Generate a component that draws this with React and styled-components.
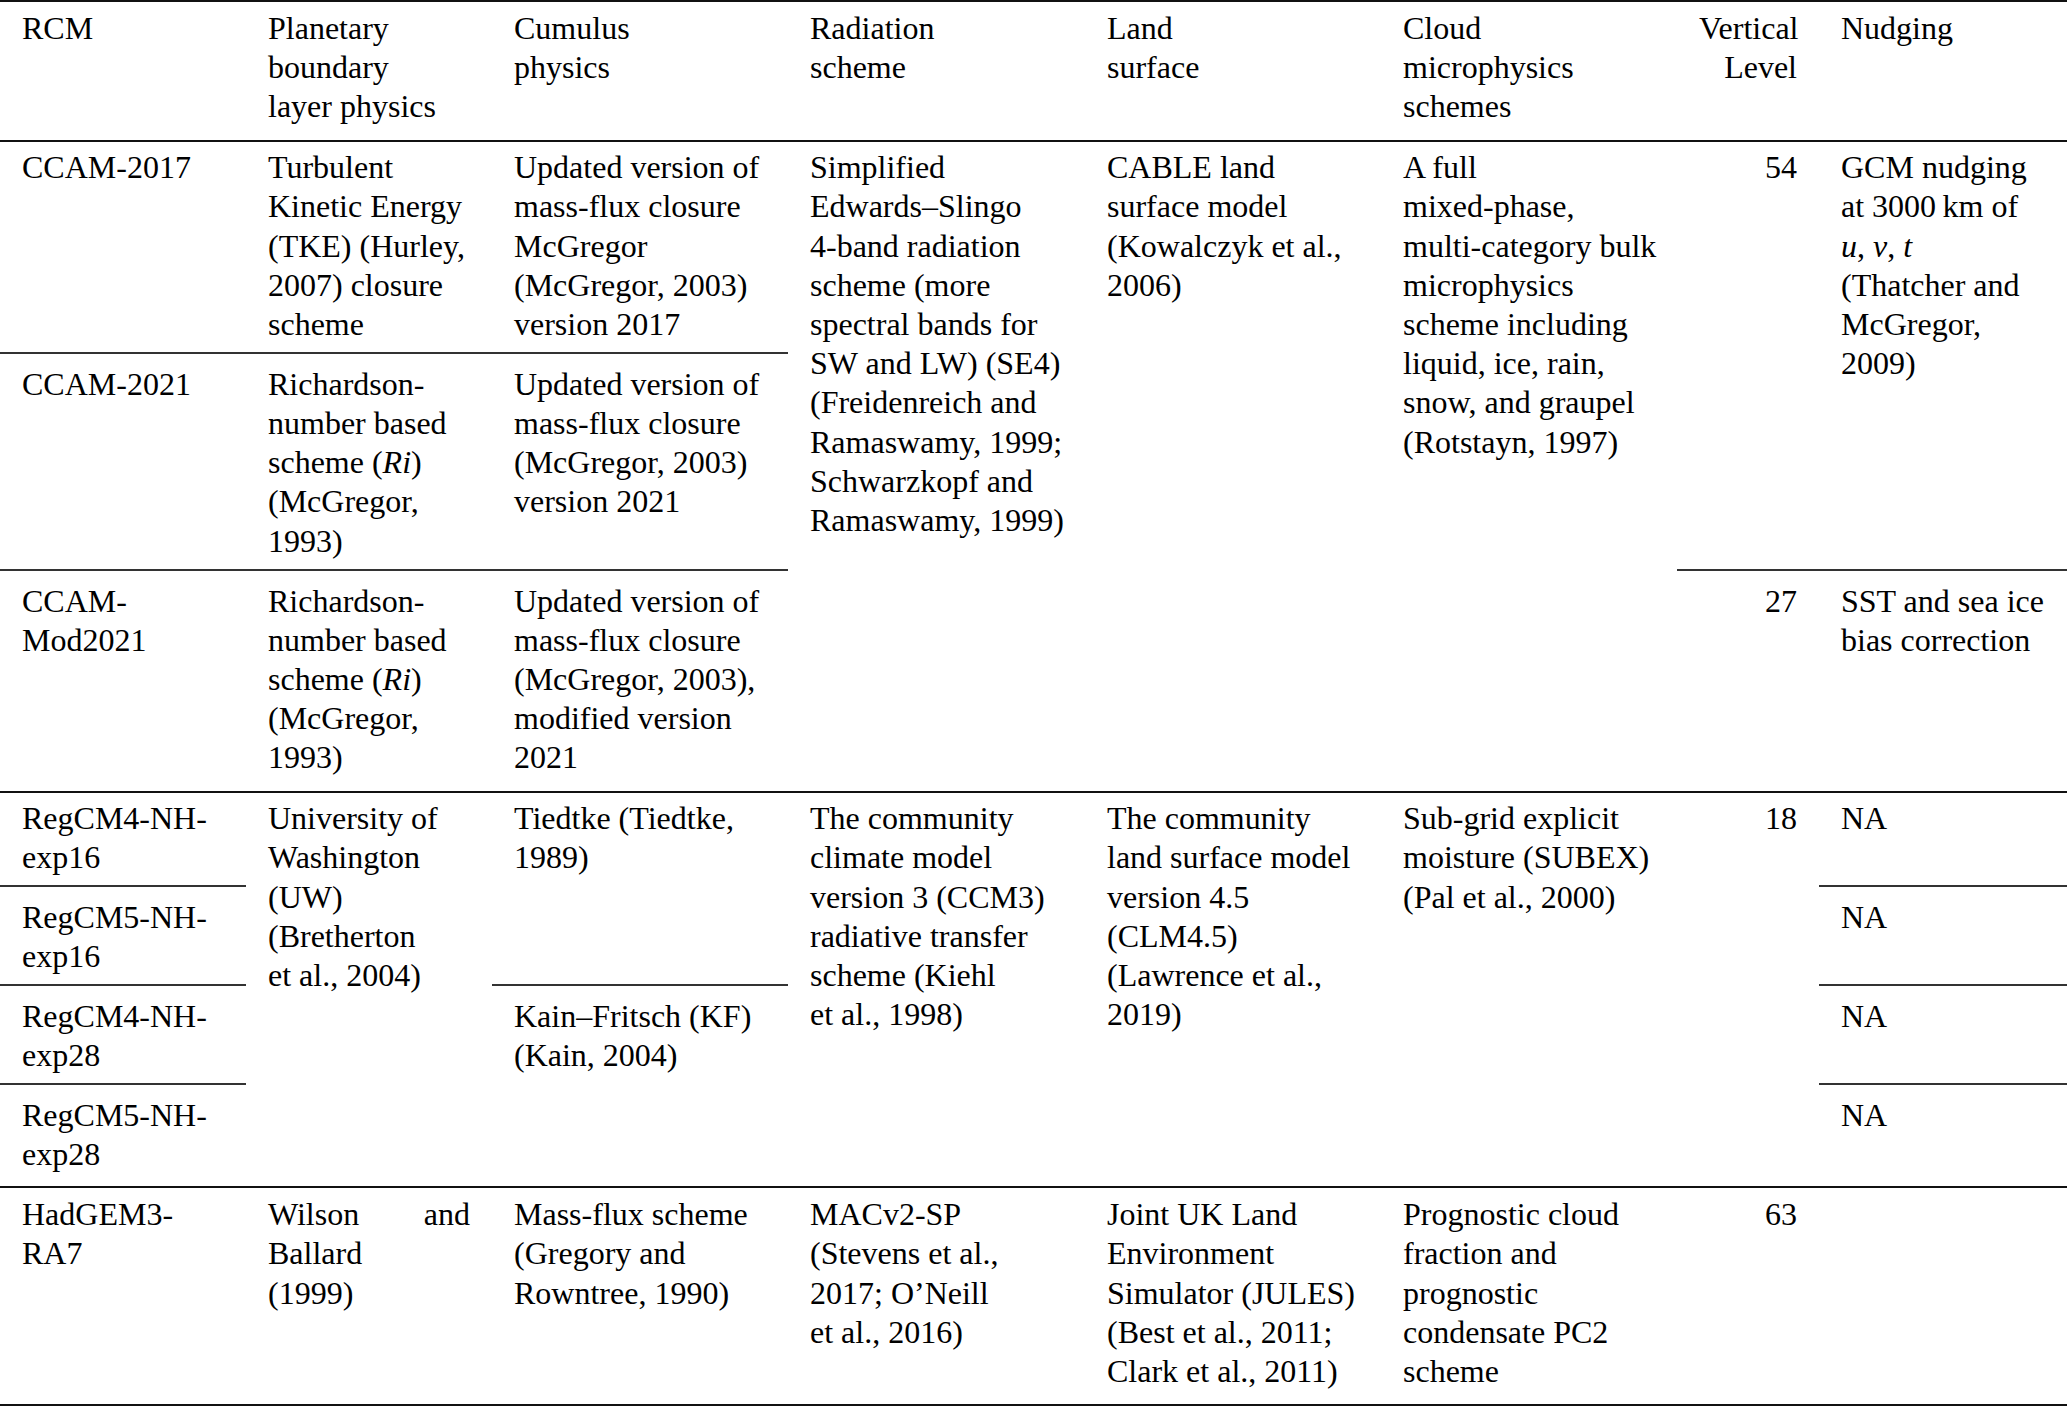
import React from 'react';
import styled, { createGlobalStyle } from 'styled-components';

const Global = createGlobalStyle`
  html, body { margin: 0; padding: 0; background: #ffffff; }
  body {
    font-family: "Liberation Serif", "Times New Roman", serif;
    color: #000000;
  }
`;

const Table = styled.table`
  width: 2067px;
  table-layout: fixed;
  border-collapse: separate;
  border-spacing: 0;
  border-top: 2px solid #111111;
  font-size: 32px;
  line-height: 39.2px;
`;

const Col = styled.col`
  width: ${(p) => p.$w}px;
`;

const Row = styled.tr`
  & > td,
  & > th {
    padding-top: ${(p) => p.$pt}px;
    padding-bottom: ${(p) => p.$pb}px;
  }
`;

const Cell = styled.td`
  vertical-align: top;
  padding-left: 22px;
  padding-right: 22px;
  text-align: ${(p) => (p.$right ? 'right' : 'left')};
  white-space: nowrap;
  font-weight: normal;
  border-bottom: 2px solid ${(p) => (p.$thin ? '#333333' : '#111111')};
`;

const HeadCell = styled(Cell).attrs({ as: 'th' })``;

const Math = styled.i`
  font-style: italic;
`;

const Spread = styled.span`
  display: flex;
  justify-content: space-between;
`;

const Lines = ({ l }) =>
  l.map((x, i) => (
    <React.Fragment key={i}>
      {i > 0 && <br />}
      {x}
    </React.Fragment>
  ));

const widths = [246, 246, 296, 297, 296, 296, 142, 248];

const pbl_ri = ['Richardson-', 'number based', <>scheme (<Math>Ri</Math>)</>, '(McGregor,', '1993)'];

export default function App() {
  return (
    <>
      <Global />
      <Table>
        <colgroup>
          {widths.map((w, i) => (
            <Col key={i} $w={w} />
          ))}
        </colgroup>
        <thead>
          <Row $pt={7} $pb={13}>
            <HeadCell>RCM</HeadCell>
            <HeadCell><Lines l={['Planetary', 'boundary', 'layer physics']} /></HeadCell>
            <HeadCell><Lines l={['Cumulus', 'physics']} /></HeadCell>
            <HeadCell><Lines l={['Radiation', 'scheme']} /></HeadCell>
            <HeadCell><Lines l={['Land', 'surface']} /></HeadCell>
            <HeadCell><Lines l={['Cloud', 'microphysics', 'schemes']} /></HeadCell>
            <HeadCell $right><Lines l={['Vertical', 'Level']} /></HeadCell>
            <HeadCell>Nudging</HeadCell>
          </Row>
        </thead>
        <tbody>
          <Row $pt={6.5} $pb={7.4}>
            <Cell $thin>CCAM-2017</Cell>
            <Cell $thin><Lines l={['Turbulent', 'Kinetic Energy', '(TKE) (Hurley,', '2007) closure', 'scheme']} /></Cell>
            <Cell $thin><Lines l={['Updated version of', 'mass-flux closure', 'McGregor', '(McGregor, 2003)', 'version 2017']} /></Cell>
            <Cell rowSpan={3}>
              <Lines
                l={[
                  'Simplified',
                  'Edwards\u2013Slingo',
                  '4-band radiation',
                  'scheme (more',
                  'spectral bands for',
                  'SW and LW) (SE4)',
                  '(Freidenreich and',
                  'Ramaswamy, 1999;',
                  'Schwarzkopf and',
                  'Ramaswamy, 1999)',
                ]}
              />
            </Cell>
            <Cell rowSpan={3}><Lines l={['CABLE land', 'surface model', '(Kowalczyk et al.,', '2006)']} /></Cell>
            <Cell rowSpan={3}>
              <Lines
                l={[
                  'A full',
                  'mixed-phase,',
                  'multi-category bulk',
                  'microphysics',
                  'scheme including',
                  'liquid, ice, rain,',
                  'snow, and graupel',
                  '(Rotstayn, 1997)',
                ]}
              />
            </Cell>
            <Cell rowSpan={2} $right $thin>54</Cell>
            <Cell rowSpan={2} $thin>
              <Lines
                l={[
                  'GCM nudging',
                  'at 3000\u2009km of',
                  <><Math>u</Math>, <Math>v</Math>, <Math>t</Math></>,
                  '(Thatcher and',
                  'McGregor,',
                  '2009)',
                ]}
              />
            </Cell>
          </Row>
          <Row $pt={11.3} $pb={7.7}>
            <Cell $thin>CCAM-2021</Cell>
            <Cell $thin><Lines l={pbl_ri} /></Cell>
            <Cell $thin><Lines l={['Updated version of', 'mass-flux closure', '(McGregor, 2003)', 'version 2021']} /></Cell>
          </Row>
          <Row $pt={11} $pb={13.4}>
            <Cell><Lines l={['CCAM-', 'Mod2021']} /></Cell>
            <Cell><Lines l={pbl_ri} /></Cell>
            <Cell><Lines l={['Updated version of', 'mass-flux closure', '(McGregor, 2003),', 'modified version', '2021']} /></Cell>
            <Cell $right>27</Cell>
            <Cell><Lines l={['SST and sea ice', 'bias correction']} /></Cell>
          </Row>
          <Row $pt={6.2} $pb={7.2}>
            <Cell $thin><Lines l={['RegCM4-NH-', 'exp16']} /></Cell>
            <Cell rowSpan={4}><Lines l={['University of', 'Washington', '(UW)', '(Bretherton', 'et al., 2004)']} /></Cell>
            <Cell rowSpan={2} $thin><Lines l={['Tiedtke (Tiedtke,', '1989)']} /></Cell>
            <Cell rowSpan={4}>
              <Lines l={['The community', 'climate model', 'version 3 (CCM3)', 'radiative transfer', 'scheme (Kiehl', 'et al., 1998)']} />
            </Cell>
            <Cell rowSpan={4}>
              <Lines l={['The community', 'land surface model', 'version 4.5', '(CLM4.5)', '(Lawrence et al.,', '2019)']} />
            </Cell>
            <Cell rowSpan={4}><Lines l={['Sub-grid explicit', 'moisture (SUBEX)', '(Pal et al., 2000)']} /></Cell>
            <Cell rowSpan={4} $right>18</Cell>
            <Cell $thin>NA</Cell>
          </Row>
          <Row $pt={11.4} $pb={7.2}>
            <Cell $thin><Lines l={['RegCM5-NH-', 'exp16']} /></Cell>
            <Cell $thin>NA</Cell>
          </Row>
          <Row $pt={11.5} $pb={7.2}>
            <Cell $thin><Lines l={['RegCM4-NH-', 'exp28']} /></Cell>
            <Cell rowSpan={2}><Lines l={['Kain\u2013Fritsch (KF)', '(Kain, 2004)']} /></Cell>
            <Cell $thin>NA</Cell>
          </Row>
          <Row $pt={11} $pb={12}>
            <Cell><Lines l={['RegCM5-NH-', 'exp28']} /></Cell>
            <Cell>NA</Cell>
          </Row>
          <Row $pt={7} $pb={13}>
            <Cell><Lines l={['HadGEM3-', 'RA7']} /></Cell>
            <Cell>
              <Spread>
                <span>Wilson</span>
                <span>and</span>
              </Spread>
              Ballard
              <br />
              (1999)
            </Cell>
            <Cell><Lines l={['Mass-flux scheme', '(Gregory and', 'Rowntree, 1990)']} /></Cell>
            <Cell><Lines l={['MACv2-SP', '(Stevens et al.,', '2017; O\u2019Neill', 'et al., 2016)']} /></Cell>
            <Cell>
              <Lines l={['Joint UK Land', 'Environment', 'Simulator (JULES)', '(Best et al., 2011;', 'Clark et al., 2011)']} />
            </Cell>
            <Cell><Lines l={['Prognostic cloud', 'fraction and', 'prognostic', 'condensate PC2', 'scheme']} /></Cell>
            <Cell $right>63</Cell>
            <Cell />
          </Row>
        </tbody>
      </Table>
    </>
  );
}
